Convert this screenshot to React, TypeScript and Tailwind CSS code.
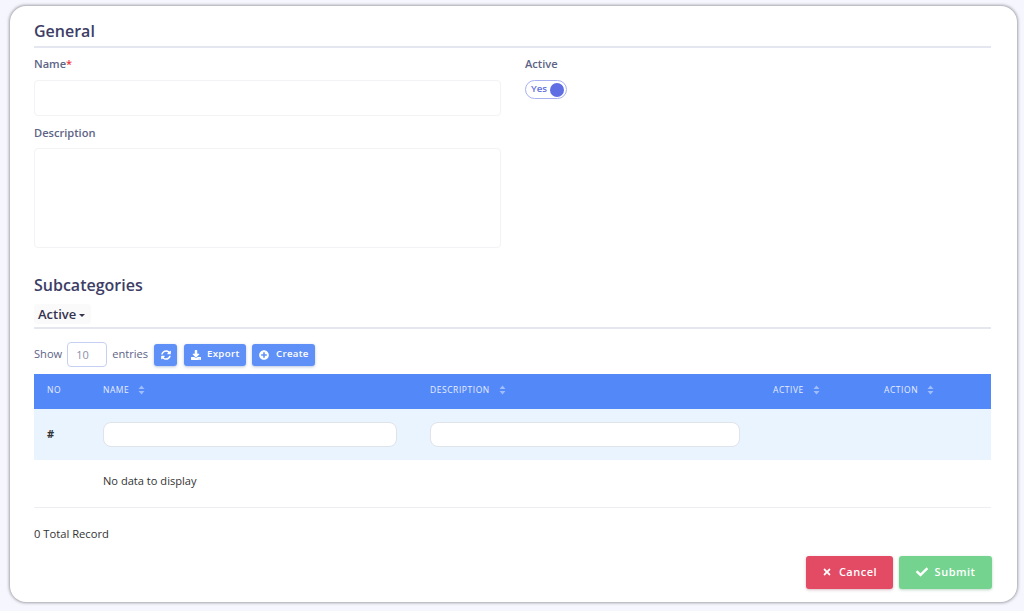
import { FaCheck, FaDownload, FaPlusCircle, FaSyncAlt, FaTimes } from "react-icons/fa"

const font = "font-['Open_Sans',sans-serif]"

function SortIcon() {
  return (
    <svg width="7" height="10" viewBox="0 0 7 10" className="ml-[9px] inline-block -translate-y-[1px] align-middle fill-white/45">
      <path d="M3.5 0.5L6.5 4H0.5Z" />
      <path d="M3.5 9.5L0.5 6H6.5Z" />
    </svg>
  )
}

function HeadCell({ label, sort = true, width }: { label: string; sort?: boolean; width: string }) {
  return (
    <th className={`${width} pb-[2px] pl-[13px] text-left align-middle text-[8.5px] font-medium tracking-[0.55px] text-[#e6edff]`}>
      {label}
      {sort && <SortIcon />}
    </th>
  )
}

function ToolButton({ children, className }: { children: React.ReactNode; className: string }) {
  return (
    <button className={`flex h-[22px] items-center rounded-[3px] bg-[#5f90f8] text-[9.7px] font-semibold tracking-[0.3px] text-white shadow-[0_1px_3px_rgba(60,90,160,0.35)] ${className}`}>
      {children}
    </button>
  )
}

export default function App() {
  return (
    <div className={`${font} h-[611px] w-[1024px] overflow-hidden bg-[#f6f7fe] pt-[6px] pl-[10px]`}>
      <div className="h-[596px] w-[1007px] rounded-[16px] bg-white pt-[15px] pr-[26px] pl-[24px] shadow-[0_0_3px_1px_rgba(90,90,100,0.55)]">
        <h2 className="h-[27px] border-b-2 border-[#e4e6f0] text-[16px] leading-[21px] font-semibold text-[#3d3d66]">General</h2>

        <div className="grid grid-cols-[467px_1fr] gap-x-6 pt-[8px]">
          <div>
            <label className="block h-[24px] text-[11.1px] leading-[16px] font-semibold text-[#5d6485]">
              Name<span className="text-[#f03a3a]">*</span>
            </label>
            <input className="block h-[36px] w-full rounded-[4px] border border-[#f3f3f6] bg-white" />
            <label className="mt-[9px] block h-[23px] text-[11.1px] leading-[15px] font-semibold text-[#5d6485]">Description</label>
            <textarea className="block h-[100px] w-full resize-none rounded-[4px] border border-[#f3f3f6] bg-white" />
          </div>
          <div>
            <label className="block h-[24px] text-[11.1px] leading-[16px] font-semibold text-[#5d6485]">Active</label>
            <div className="flex h-[19px] w-[42px] items-center justify-between rounded-full border border-[#a9b0f0] pr-[2px] pl-[5px]">
              <span className="text-[9.7px] font-semibold text-[#6270e0]">Yes</span>
              <span className="h-[14px] w-[14px] rounded-full bg-[#5f6ee2]" />
            </div>
          </div>
        </div>

        <h2 className="mt-[26px] text-[16px] leading-[22px] font-semibold text-[#3d3d66]">Subcategories</h2>
        <div className="mt-[8px] h-[25px] border-b-2 border-[#e4e6f0]">
          <button className="flex h-[20px] w-[57px] items-center gap-[3px] rounded-[3px] bg-[#fafafb] px-1 text-[13px] leading-none font-semibold text-[#33334d]">
            Active
            <span className="mt-[2px] h-0 w-0 border-x-[3px] border-t-[3px] border-x-transparent border-t-[#33334d]" />
          </button>
        </div>

        <div className="mt-[13px] flex items-center text-[11.1px] text-[#5d6485]">
          <span>Show</span>
          <input value="10" readOnly className="mx-[5px] h-[25px] w-[40px] rounded-[4px] border border-[#c6d0f2] pl-2 text-[11px] text-[#8a90a8]" />
          <span>entries</span>
          <ToolButton className="ml-[6px] w-[23px] justify-center">
            <FaSyncAlt size={10} />
          </ToolButton>
          <ToolButton className="ml-[7px] w-[62px] pl-[7px]">
            <FaDownload size={10} />
            <span className="ml-[6px]">Export</span>
          </ToolButton>
          <ToolButton className="ml-[6px] w-[63px] pl-[7px]">
            <FaPlusCircle size={10} />
            <span className="ml-[7px]">Create</span>
          </ToolButton>
        </div>

        <table className="mt-[7px] w-full table-fixed border-collapse">
          <thead>
            <tr className="h-[35px] bg-[#5388f8]">
              <HeadCell label="NO" sort={false} width="w-[56px]" />
              <HeadCell label="NAME" width="w-[327px]" />
              <HeadCell label="DESCRIPTION" width="w-[343px]" />
              <HeadCell label="ACTIVE" width="w-[111px]" />
              <HeadCell label="ACTION" width="w-[120px]" />
            </tr>
          </thead>
          <tbody>
            <tr className="h-[51px] bg-[#e9f4ff]">
              <td className="pl-[13px] text-[11px] font-bold text-[#333333]">#</td>
              <td className="pl-[13px]">
                <input className="block h-[25px] w-[294px] rounded-[8px] border border-[#dfe3ea] bg-white" />
              </td>
              <td className="pl-[13px]">
                <input className="block h-[25px] w-[310px] rounded-[8px] border border-[#dfe3ea] bg-white" />
              </td>
              <td />
              <td />
            </tr>
            <tr className="h-[47px] border-b border-[#eeeef2]">
              <td />
              <td colSpan={4} className="pb-[4px] pl-[13px] text-[11.1px] text-[#333333]">No data to display</td>
            </tr>
          </tbody>
        </table>

        <p className="mt-[18px] text-[11.2px] leading-[16px] text-[#333333]">0 Total Record</p>

        <div className="-mr-px mt-[14px] flex justify-end gap-[6px]">
          <button className="flex h-[33px] w-[87px] items-center justify-center gap-[7px] rounded-[3px] bg-[#e34a64] text-[11px] font-semibold tracking-[0.5px] text-white shadow-[0_1px_3px_rgba(120,40,60,0.3)]">
            <FaTimes size={10} />
            Cancel
          </button>
          <button className="flex h-[33px] w-[93px] items-center justify-center gap-[7px] rounded-[3px] bg-[#74d38f] text-[11px] font-semibold tracking-[0.5px] text-white shadow-[0_1px_3px_rgba(40,120,70,0.3)]">
            <FaCheck size={12} />
            Submit
          </button>
        </div>
      </div>
    </div>
  )
}
